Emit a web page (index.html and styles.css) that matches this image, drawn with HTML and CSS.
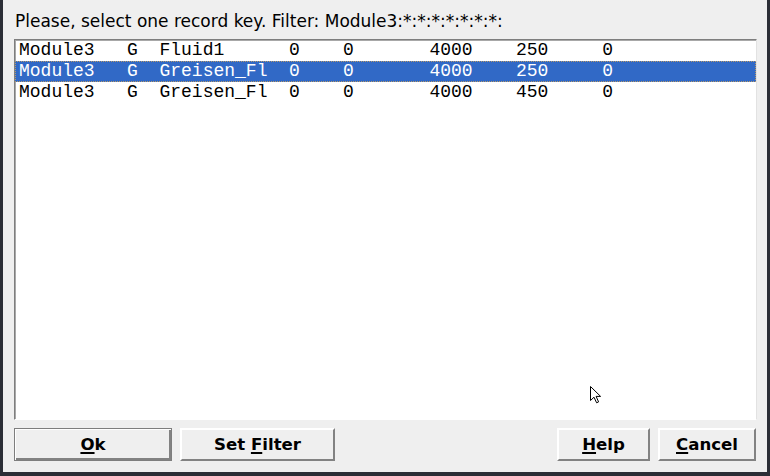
FILE: index.html
```html
<!DOCTYPE html>
<html>
<head>
<meta charset="utf-8">
<link rel="stylesheet" href="styles.css">
</head>
<body>
<div class="window">
  <div class="title">Please, select one record key. Filter: Module3:*:*:*:*:*:*:*:</div>
  <div class="list">
    <div class="row">Module3   G  Fluid1      0    0       4000    250     0</div>
    <div class="row selected">Module3   G  Greisen_Fl  0    0       4000    250     0</div>
    <div class="row">Module3   G  Greisen_Fl  0    0       4000    450     0</div>
  </div>
  <div class="buttons">
    <div class="group">
      <div class="btn btn-ok default"><span class="label"><span class="ul">O</span>k</span></div>
      <div class="btn btn-filter"><span class="label">Set <span class="ul">F</span>ilter</span></div>
    </div>
    <div class="group">
      <div class="btn btn-help"><span class="label"><span class="ul">H</span>elp</span></div>
      <div class="btn btn-cancel"><span class="label"><span class="ul">C</span>ancel</span></div>
    </div>
  </div>
  <svg class="cursor" width="12" height="18" viewBox="0 0 12 18">
    <path d="M0.5 0.5 L0.5 14.5 L4 11.2 L6.6 16.8 L8.6 15.9 L6.1 10.4 L10.6 10.4 Z" fill="#ffffff" stroke="#000000" stroke-width="1" stroke-linejoin="miter"/>
  </svg>
</div>
</body>
</html>
```
FILE: styles.css
```css
html, body {
  margin: 0;
  padding: 0;
  background: #2b2e36;
  width: 770px;
  height: 476px;
  overflow: hidden;
}
.window {
  position: relative;
  margin-left: 3px;
  width: 764px;
  height: 472px;
  background: #efefef;
  box-sizing: border-box;
  padding: 11px 10px 0 11px;
  display: flex;
  flex-direction: column;
}
.title {
  font-family: "DejaVu Sans", sans-serif;
  font-size: 17px;
  line-height: 20px;
  height: 20px;
  color: #000;
  padding-left: 1px;
  white-space: pre;
}
.list {
  margin-top: 8px;
  height: 381px;
  background: #ffffff;
  box-sizing: border-box;
  border-top: 1px solid #7e7e7e;
  border-left: 1px solid #7e7e7e;
  border-right: 1px solid #e2e2e2;
  border-bottom: 1px solid #ffffff;
  box-shadow: inset 1px 1px 0 #a8a8a8;
}
.row {
  font-family: "Liberation Mono", monospace;
  font-size: 18px;
  line-height: 21px;
  height: 21px;
  padding-left: 4px;
  white-space: pre;
  color: #000;
  box-sizing: border-box;
}
.row.selected {
  background: #3169c6;
  color: #ffffff;
  outline: 1px dotted #b89a6a;
  outline-offset: -1px;
}
.buttons {
  margin-top: 8px;
  display: flex;
  justify-content: space-between;
  padding-right: 1px;
}
.group {
  display: flex;
  gap: 8px;
}
.btn {
  height: 33px;
  box-sizing: border-box;
  display: flex;
  align-items: center;
  justify-content: center;
  font-family: "DejaVu Sans", sans-serif;
  font-weight: bold;
  font-size: 16.6px;
  color: #000;
  background: #efefef;
  border-top: 2px solid #ffffff;
  border-left: 2px solid #ffffff;
  border-right: 2px solid #828282;
  border-bottom: 2px solid #828282;
}
.label {
  white-space: pre;
}
.btn.default {
  border: 1px solid #7e7e7e;
  box-shadow: inset 1px 1px 0 #ffffff, inset -2px -2px 0 #828282;
}
.btn-ok { width: 158px; }
.btn-filter { width: 155px; }
.btn-help { width: 93px; }
.btn-cancel { width: 98px; }
.ul {
  text-decoration: underline;
  text-underline-offset: 2px;
  text-decoration-thickness: 2px;
}
.cursor {
  position: absolute;
  left: 587px;
  top: 386px;
}
```
